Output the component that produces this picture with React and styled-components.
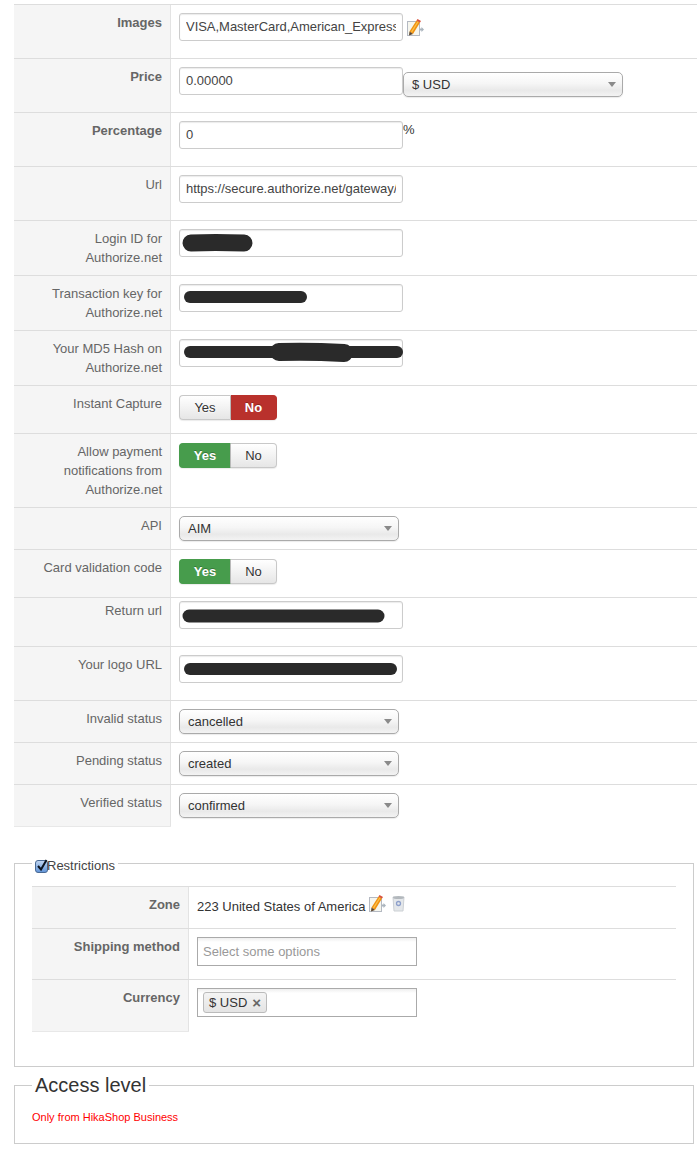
import React from 'react';
import styled, { createGlobalStyle } from 'styled-components';

const GlobalStyle = createGlobalStyle`
  html, body {
    margin: 0;
    padding: 0;
    background: #fff;
    font-family: "Liberation Sans", Arial, sans-serif;
    font-size: 13px;
    line-height: 19px;
    color: #333;
  }
`;

const Page = styled.div`
  width: 697px;
  height: 1154px;
  padding-top: 4px;
  box-sizing: border-box;
  overflow: hidden;
`;

const ParamTable = styled.div`
  margin-left: 14px;
`;

const Row = styled.div`
  display: grid;
  grid-template-columns: 157px 1fr;
  border-top: 1px solid #ddd;
  &:last-child > div:first-child {
    box-shadow: 0 1px 0 #e8e8e8;
  }
`;

const Key = styled.div`
  background: #f5f5f5;
  border-right: 1px solid #e3e3e3;
  padding: ${(p) => (p.$tight ? 3 : 8)}px 8px 8px 0;
  text-align: right;
  color: #666;
  font-weight: ${(p) => (p.$bold ? 700 : 400)};
`;

const Value = styled.div`
  display: flex;
  align-items: flex-start;
  padding: ${(p) => (p.$tight ? 3 : 8)}px 0 8px 8px;
`;

const FieldWrap = styled.div`
  position: relative;
  width: 224px;
  height: 28px;
  margin-bottom: 9px;
`;

const TextField = styled.input`
  display: block;
  width: 100%;
  height: 100%;
  box-sizing: border-box;
  padding: 3px 6px 5px;
  border: 1px solid #ccc;
  border-radius: 3px;
  background: #fff;
  box-shadow: inset 0 1px 1px rgba(0, 0, 0, 0.08);
  font: 13px "Liberation Sans", Arial, sans-serif;
  letter-spacing: -0.03px;
  color: #444;
  outline: none;
`;

const Scribble = styled.svg`
  position: absolute;
  left: 0;
  top: 0;
  width: 224px;
  height: 28px;
  overflow: visible;
`;

const SelectBox = styled.div`
  display: flex;
  align-items: center;
  justify-content: space-between;
  box-sizing: border-box;
  width: 220px;
  height: 25px;
  margin-top: ${(p) => p.$offset || 0}px;
  padding: 0 6px 0 8px;
  border: 1px solid #aaa;
  border-radius: 5px;
  background: linear-gradient(#fff 0%, #f6f6f6 45%, #e9e9e9 75%, #f3f3f3 100%);
  box-shadow: 0 1px 1px rgba(0, 0, 0, 0.08);
  color: #333;
`;

const Caret = styled.span`
  width: 0;
  height: 0;
  border-left: 4px solid transparent;
  border-right: 4px solid transparent;
  border-top: 5px solid #8a8a8a;
`;

const Toggle = styled.div`
  display: flex;
  width: 98px;
  height: 25px;
  margin: 1px 0 5px;
`;

const ToggleButton = styled.div`
  display: flex;
  align-items: center;
  justify-content: center;
  box-sizing: border-box;
  width: ${(p) => p.$width}px;
  border: 1px solid ${(p) => (p.$color ? p.$color : '#c8c8c8')};
  border-radius: ${(p) => (p.$first ? '4px 0 0 4px' : '0 4px 4px 0')};
  ${(p) => (p.$first ? 'border-right-color: #bbb;' : 'border-left: 0;')}
  background: ${(p) => p.$color || 'linear-gradient(#fff, #e6e6e6)'};
  color: ${(p) => (p.$color ? '#fff' : '#333')};
  font-weight: ${(p) => (p.$color ? 700 : 400)};
  text-shadow: ${(p) => (p.$color ? '0 -1px 0 rgba(0,0,0,0.25)' : '0 1px 1px rgba(255,255,255,0.75)')};
  box-shadow: 0 1px 1px rgba(0, 0, 0, 0.08);
`;

const Percent = styled.span`
  color: #333;
  line-height: 18px;
`;

const IconSvg = styled.svg`
  flex: none;
  margin: ${(p) => p.$margin || '0'};
`;

const Restrictions = styled.fieldset`
  margin: 26px 0 0 14px;
  width: 680px;
  height: 215px;
  box-sizing: border-box;
  padding: 0 17px;
  border: 1px solid #ccc;
`;

const CheckLegend = styled.legend`
  display: flex;
  align-items: center;
  margin-left: 0;
  padding: 4px 3px 0;
  height: 19px;
  color: #444;
`;

const InnerTable = styled.div`
  margin-top: 11px;
`;

const ZoneText = styled.span`
  line-height: 19px;
  padding-top: 2px;
  margin-bottom: 4px;
  color: #333;
`;

const ChosenBox = styled.div`
  display: flex;
  align-items: center;
  box-sizing: border-box;
  width: 220px;
  height: 29px;
  margin-bottom: ${(p) => p.$bottom}px;
  padding: 0 5px;
  border: 1px solid #aaa;
  background: linear-gradient(#eee 0%, #fff 15%);
  color: #999;
`;

const Tag = styled.span`
  display: inline-flex;
  align-items: center;
  gap: 5px;
  box-sizing: border-box;
  height: 21px;
  padding: 0 5px;
  border: 1px solid #bbb;
  border-radius: 3px;
  background: linear-gradient(#f4f4f4, #e4e4e4);
  color: #333;
`;

const TagClose = styled.span`
  color: #666;
  font-weight: 700;
  font-size: 15px;
`;

const Access = styled.fieldset`
  margin: 5px 0 0 14px;
  width: 680px;
  height: 72px;
  box-sizing: border-box;
  padding: 0 17px;
  border: 1px solid #ccc;
`;

const AccessLegend = styled.legend`
  margin-left: 0;
  padding: 0 3px;
  font-size: 20px;
  line-height: 26px;
  color: #333;
`;

const Notice = styled.div`
  margin-top: 11px;
  font-size: 11px;
  line-height: 16px;
  color: #f00;
`;

function EditIcon({ margin }) {
  return (
    <IconSvg width="17" height="18" viewBox="0 0 17 18" $margin={margin}>
      <path d="M12.5 9.5h2v-1.5l2.5 2.5-2.5 2.5v-1.5h-2z" fill="#aab4bd" />
      <rect x="0.5" y="2.5" width="12" height="14" fill="#f6f6ee" stroke="#b4b9c2" />
      <path d="M2.5 12.5L9.5 1.5 13 3.5 6 15z" fill="#f0900f" />
      <path d="M4 12.5L10.5 2.5 11.5 3 5 13.5z" fill="#fbc14a" />
      <path d="M9.5 1.5l1-1.5 3.5 2-1 1.5z" fill="#d9503a" />
      <path d="M2.5 12.5L6 15 2 16.5z" fill="#5a4632" />
    </IconSvg>
  );
}

function TrashIcon() {
  return (
    <IconSvg width="13" height="17" viewBox="0 0 13 17" $margin="0 0 0 6px">
      <path d="M1 2h11l-1 14H2z" fill="#e4e7ea" stroke="#ccd0d4" />
      <ellipse cx="6.5" cy="2.5" rx="5.5" ry="1.5" fill="#b3b8bd" />
      <circle cx="6.5" cy="8.5" r="2" fill="none" stroke="#8ea0cc" strokeWidth="1.3" />
    </IconSvg>
  );
}

function CheckIcon() {
  return (
    <IconSvg width="13" height="14" viewBox="0 0 13 14" $margin="1px -1px 0 0">
      <defs>
        <linearGradient id="chk" x1="0" y1="0" x2="0" y2="1">
          <stop offset="0" stopColor="#c4d8f2" />
          <stop offset="1" stopColor="#5f93d8" />
        </linearGradient>
      </defs>
      <rect x="0.5" y="1.5" width="12" height="12" rx="2.5" fill="url(#chk)" stroke="#4a6a94" />
      <path d="M3 7l3 3.5L11.5 1" fill="none" stroke="#0c1420" strokeWidth="2" />
    </IconSvg>
  );
}

function Field({ value, scribble }) {
  return (
    <FieldWrap>
      <TextField value={value} readOnly />
      {scribble && (
        <Scribble viewBox="0 0 224 28">
          {scribble.map((s, i) => (
            <path key={i} d={s.d} fill="none" stroke="#2a2a2a" strokeWidth={s.w} strokeLinecap="round" strokeLinejoin="round" />
          ))}
        </Scribble>
      )}
    </FieldWrap>
  );
}

function Select({ value, offset }) {
  return (
    <SelectBox $offset={offset}>
      <span>{value}</span>
      <Caret />
    </SelectBox>
  );
}

function YesNo({ yes }) {
  return (
    <Toggle>
      <ToggleButton $first $width={52} $color={yes ? '#479c4c' : null}>Yes</ToggleButton>
      <ToggleButton $width={46} $color={yes ? null : '#b9312c'}>No</ToggleButton>
    </Toggle>
  );
}

export default function App() {
  return (
    <Page>
      <GlobalStyle />
      <ParamTable>
        <Row>
          <Key $bold>Images</Key>
          <Value>
            <Field value="VISA,MasterCard,American_Express" />
            <EditIcon margin="6px 0 0 4px" />
          </Value>
        </Row>
        <Row>
          <Key $bold>Price</Key>
          <Value>
            <Field value="0.00000" />
            <Select value="$ USD" offset={5} />
          </Value>
        </Row>
        <Row>
          <Key $bold>Percentage</Key>
          <Value>
            <Field value="0" />
            <Percent>%</Percent>
          </Value>
        </Row>
        <Row>
          <Key>Url</Key>
          <Value><Field value="https://secure.authorize.net/gateway/transact.dll" /></Value>
        </Row>
        <Row>
          <Key>Login ID for<br />Authorize.net</Key>
          <Value>
            <Field scribble={[{ d: 'M12 14 Q35 13 65 14', w: 17 }]} value="" />
          </Value>
        </Row>
        <Row>
          <Key>Transaction key for<br />Authorize.net</Key>
          <Value>
            <Field scribble={[{ d: 'M11 13H122', w: 12 }]} value="" />
          </Value>
        </Row>
        <Row>
          <Key>Your MD5 Hash on<br />Authorize.net</Key>
          <Value>
            <Field scribble={[{ d: 'M11 13H218', w: 12 }, { d: 'M100 13 Q130 12 165 14', w: 18 }]} value="" />
          </Value>
        </Row>
        <Row>
          <Key>Instant Capture</Key>
          <Value><YesNo /></Value>
        </Row>
        <Row>
          <Key>Allow payment<br />notifications from<br />Authorize.net</Key>
          <Value><YesNo yes /></Value>
        </Row>
        <Row>
          <Key>API</Key>
          <Value><Select value="AIM" /></Value>
        </Row>
        <Row>
          <Key>Card validation code</Key>
          <Value><YesNo yes /></Value>
        </Row>
        <Row>
          <Key $tight>Return url</Key>
          <Value $tight>
            <Field scribble={[{ d: 'M10 15H199', w: 13 }]} value="" />
          </Value>
        </Row>
        <Row>
          <Key>Your logo URL</Key>
          <Value>
            <Field scribble={[{ d: 'M11 14H212', w: 12 }]} value="" />
          </Value>
        </Row>
        <Row>
          <Key>Invalid status</Key>
          <Value><Select value="cancelled" /></Value>
        </Row>
        <Row>
          <Key>Pending status</Key>
          <Value><Select value="created" /></Value>
        </Row>
        <Row>
          <Key>Verified status</Key>
          <Value><Select value="confirmed" /></Value>
        </Row>
      </ParamTable>

      <Restrictions>
        <CheckLegend><CheckIcon />Restrictions</CheckLegend>
        <InnerTable>
          <Row>
            <Key $bold>Zone</Key>
            <Value>
              <ZoneText>223 United States of America</ZoneText>
              <EditIcon margin="0 0 0 4px" />
              <TrashIcon />
            </Value>
          </Row>
          <Row>
            <Key $bold>Shipping method</Key>
            <Value>
              <ChosenBox $bottom={5}>Select some options</ChosenBox>
            </Value>
          </Row>
          <Row>
            <Key $bold>Currency</Key>
            <Value>
              <ChosenBox $bottom={6}>
                <Tag>$ USD <TagClose>×</TagClose></Tag>
              </ChosenBox>
            </Value>
          </Row>
        </InnerTable>
      </Restrictions>

      <Access>
        <AccessLegend>Access level</AccessLegend>
        <Notice>Only from HikaShop Business</Notice>
      </Access>
    </Page>
  );
}
